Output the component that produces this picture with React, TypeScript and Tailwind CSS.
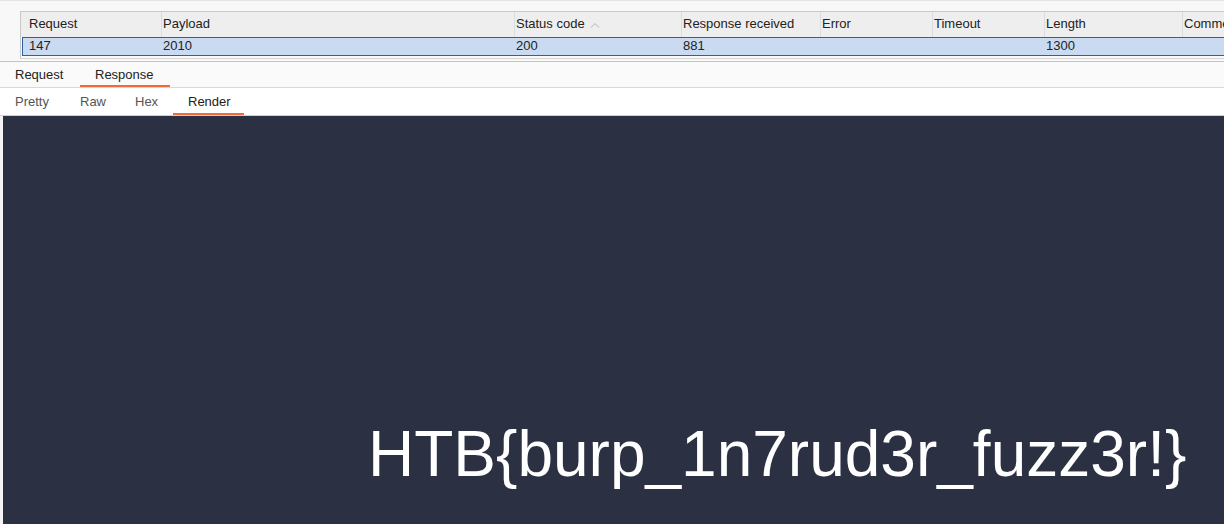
const columns = [
  { name: 'Request', w: 'w-[140px]', pad: 'pl-[8px]', rowW: 'w-[138px]', rowPad: 'pl-[6px]' },
  { name: 'Payload', w: 'w-[353px]', pad: 'pl-[1px]', rowW: 'w-[353px]', rowPad: 'pl-[2px]' },
  { name: 'Status code', w: 'w-[167px]', pad: 'pl-[1px]', rowW: 'w-[167px]', rowPad: 'pl-[2px]', sorted: true },
  { name: 'Response received', w: 'w-[139px]', pad: 'pl-[1px]', rowW: 'w-[139px]', rowPad: 'pl-[2px]' },
  { name: 'Error', w: 'w-[112px]', pad: 'pl-[1px]', rowW: 'w-[112px]', rowPad: 'pl-[2px]' },
  { name: 'Timeout', w: 'w-[112px]', pad: 'pl-[1px]', rowW: 'w-[112px]', rowPad: 'pl-[2px]' },
  { name: 'Length', w: 'w-[138px]', pad: 'pl-[1px]', rowW: 'w-[138px]', rowPad: 'pl-[2px]' },
  { name: 'Comment', w: 'w-[120px]', pad: 'pl-[1px]', rowW: 'w-[120px]', rowPad: 'pl-[2px]' },
];

const row = ['147', '2010', '200', '881', '', '', '1300', ''];

const App = () => {
  return (
    <div className="w-[1224px] h-[524px] overflow-hidden bg-white font-['Liberation_Sans',Arial,sans-serif] text-[13px] text-[#222]">
      {/* results table */}
      <div className="h-[61px] bg-[#f8f8f8] border-t border-[#e4e4e4] pl-[20px] pt-[10px]">
        <div className="h-[48px] border-l border-t border-[#c8c8c8] border-b border-b-[#d6d6d6] bg-[#fafafa] overflow-hidden">
          <div className="flex h-[25px] bg-[#eeeeee]">
            {columns.map((c, i) => (
              <div
                key={c.name}
                className={`${c.w} ${c.pad} shrink-0 flex items-center pb-[1px] whitespace-nowrap overflow-hidden ${i > 0 ? 'border-l border-[#dcdcdc]' : ''}`}
              >
                {c.name}
                {c.sorted && (
                  <svg width="10" height="6" viewBox="0 0 10 6" className="ml-[5px] mt-[1px]">
                    <path d="M1 5.5 L5 1.5 L9 5.5" fill="none" stroke="#b0b0b0" strokeWidth="1" />
                  </svg>
                )}
              </div>
            ))}
          </div>
          <div className="flex h-[19px] ml-[1px] bg-[#c9daf1] border border-[#2c62a3] border-r-0">
            {columns.map((c, i) => (
              <div key={c.name} className={`${c.rowW} ${c.rowPad} shrink-0 flex items-center pb-[2px] leading-none`}>
                {row[i]}
              </div>
            ))}
          </div>
        </div>
      </div>

      {/* request / response tabs */}
      <div className="h-[27px] bg-[#fafafa] border-t border-[#c4c4c4] border-b border-b-[#d8d8d8] flex">
        <div className="w-[80px] pl-[15px] pt-[3px] flex items-center border-b-2 border-transparent">Request</div>
        <div className="w-[90px] pl-[15px] pt-[3px] flex items-center border-b-2 border-[#f5683a]">Response</div>
      </div>

      {/* view tabs */}
      <div className="h-[28px] bg-white border-b border-[#cfcfcf] flex text-[#555]">
        <div className="w-[65px] pl-[15px] pt-[3px] flex items-center border-b-2 border-transparent">Pretty</div>
        <div className="w-[55px] pl-[15px] pt-[3px] flex items-center border-b-2 border-transparent">Raw</div>
        <div className="w-[53px] pl-[15px] pt-[3px] flex items-center border-b-2 border-transparent">Hex</div>
        <div className="w-[71px] pl-[15px] pt-[3px] flex items-center text-[#222] border-b-2 border-[#f5683a]">Render</div>
      </div>

      {/* rendered response */}
      <div className="h-[408px] pl-[3px] bg-[#f4f4f4]">
        <div className="h-full bg-[#2b3043] pl-[365px] pt-[306px]">
          <div className="text-white text-[64px] leading-none whitespace-nowrap">HTB{'{'}burp_1n7rud3r_fuzz3r!{'}'}</div>
        </div>
      </div>
    </div>
  );
};

export default App;
